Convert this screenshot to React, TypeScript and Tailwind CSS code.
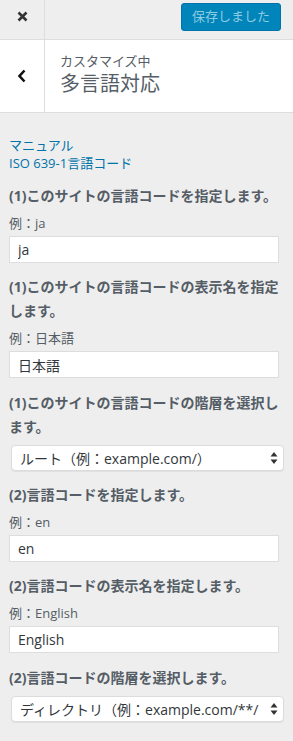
import { FC } from 'react';

const font = {
  fontFamily: '"Open Sans", "Noto Sans CJK JP", sans-serif',
};

const TextField: FC<{ label: string; example: string; value: string }> = ({
  label,
  example,
  value,
}) => (
  <div className="mt-3">
    <div className="text-[14px] font-bold leading-[24px] text-[#555d66]">
      {label}
    </div>
    <div className="mt-[6px] text-[13px] leading-[18px] text-[#555d66]">
      例：{example}
    </div>
    <input
      readOnly
      value={value}
      className="mt-1 block h-[27px] w-[270px] border border-[#ddd] bg-white px-[8px] text-[14px] text-[#32373c] outline-none"
    />
  </div>
);

const SelectField: FC<{ label: string; value: string; className?: string }> = ({
  label,
  value,
  className,
}) => (
  <div className={className}>
    <div className="text-[14px] font-bold leading-[24px] text-[#555d66]">
      {label}
    </div>
    <div className="relative ml-[2px] mt-[6px] w-[273px]">
      <div className="flex h-[26px] items-center overflow-hidden rounded-[4px] border border-[#dcdcdc] bg-white pl-[8px] pr-[24px] text-[14px] text-[#32373c] shadow-[0_1px_1px_rgba(0,0,0,0.06)]">
        <span className="overflow-hidden whitespace-nowrap">{value}</span>
      </div>
      <svg
        className="absolute right-[6px] top-[6px]"
        width="8"
        height="14"
        viewBox="0 0 8 14"
      >
        <path d="M4 1 L7.5 5.5 H0.5 Z" fill="#333" />
        <path d="M4 13 L7.5 8.5 H0.5 Z" fill="#333" />
      </svg>
    </div>
  </div>
);

export default function App() {
  return (
    <div className="h-[741px] w-[293px] overflow-hidden bg-[#eee]" style={font}>
      {/* top bar */}
      <div className="flex h-[40px] border-b border-[#ddd] bg-[#eee]">
        <div className="flex w-[45px] items-center justify-center border-r border-[#ddd] pb-[6px]">
          <svg width="11" height="11" viewBox="0 0 11 11">
            <path
              d="M1.5 1.5 L9.5 9.5 M9.5 1.5 L1.5 9.5"
              stroke="#333"
              strokeWidth="2.6"
            />
          </svg>
        </div>
        <div className="flex flex-1 items-start justify-end pr-[12px] pt-[3px]">
          <div className="flex h-[28px] w-[100px] items-center justify-center rounded-[3px] border border-[#0073aa] bg-[#0085ba] text-[13px] text-[#8fcbe3]">
            保存しました
          </div>
        </div>
      </div>

      {/* section header */}
      <div className="flex h-[73px] border-b border-[#ddd] bg-white">
        <div className="flex w-[45px] items-center justify-center border-r border-[#ddd]">
          <svg width="10" height="14" viewBox="0 0 10 14">
            <path
              d="M7.5 1.5 L2.5 7 L7.5 12.5"
              fill="none"
              stroke="#111"
              strokeWidth="2.6"
            />
          </svg>
        </div>
        <div className="flex flex-col justify-center pl-[15px] pb-[2px]">
          <div className="text-[13px] leading-[18px] text-[#555d66]">
            カスタマイズ中
          </div>
          <div className="text-[20px] leading-[28px] text-[#555d66]">
            多言語対応
          </div>
        </div>
      </div>

      {/* controls */}
      <div className="pl-[9px] pr-[10px] pt-[23px]">
        <div className="flex flex-col text-[13px] leading-[18px] text-[#0073aa]">
          <a>マニュアル</a>
          <a>ISO 639-1言語コード</a>
        </div>
        <div className="mt-[3px]">
          <TextField
            label="(1)このサイトの言語コードを指定します。"
            example="ja"
            value="ja"
          />
          <TextField
            label="(1)このサイトの言語コードの表示名を指定します。"
            example="日本語"
            value="日本語"
          />
          <SelectField
            className="mt-[13px]"
            label="(1)このサイトの言語コードの階層を選択します。"
            value="ルート（例：example.com/）"
          />
          <div className="mt-[2px]">
            <TextField
              label="(2)言語コードを指定します。"
              example="en"
              value="en"
            />
          </div>
          <TextField
            label="(2)言語コードの表示名を指定します。"
            example="English"
            value="English"
          />
          <SelectField
            className="mt-[13px]"
            label="(2)言語コードの階層を選択します。"
            value="ディレクトリ（例：example.com/**/）"
          />
        </div>
      </div>
    </div>
  );
}
